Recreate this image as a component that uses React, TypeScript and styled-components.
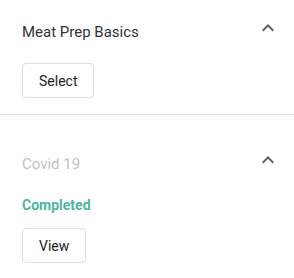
import React from "react";
import styled, { createGlobalStyle } from "styled-components";

const Global = createGlobalStyle`
  html, body { margin: 0; padding: 0; background: #fff; }
  body { font-family: Roboto, "Liberation Sans", Arial, sans-serif; }
`;

const List = styled.div`
  width: 294px;
  display: flex;
  flex-direction: column;
`;

const Section = styled.section<{ $padTop: number; $divider?: boolean }>`
  padding: ${(p) => p.$padTop}px 14px 16px 22px;
  border-bottom: ${(p) => (p.$divider ? "1px solid #e3e3e3" : "none")};
  display: flex;
  flex-direction: column;
  align-items: flex-start;
`;

const Header = styled.div`
  align-self: stretch;
  display: flex;
  justify-content: space-between;
  align-items: flex-start;
`;

const Title = styled.h3<{ $muted?: boolean }>`
  margin: 4px 0 0;
  font-size: 15px;
  line-height: 24px;
  font-weight: 400;
  color: ${(p) => (p.$muted ? "#c2c2c2" : "#333")};
`;

const Status = styled.div`
  margin-top: 19px;
  font-size: 14px;
  line-height: 20px;
  font-weight: 700;
  color: #4fb3a2;
`;

const Button = styled.button<{ $gap: number }>`
  margin-top: ${(p) => p.$gap}px;
  height: 35px;
  box-sizing: border-box;
  padding: 0 16px;
  border: 1px solid #dedede;
  border-radius: 4px;
  background: #fff;
  font-family: Roboto, "Liberation Sans", Arial, sans-serif;
  font-size: 14px;
  color: #222;
  cursor: pointer;
`;

const Chevron = () => (
  <svg width="24" height="24" viewBox="0 0 24 24" aria-hidden="true">
    <path d="M12 8l-6 6 1.41 1.41L12 10.83l4.59 4.58L18 14z" fill="#5f5f5f" />
  </svg>
);

export default function App() {
  return (
    <>
      <Global />
      <List>
        <Section $padTop={16} $divider>
          <Header>
            <Title>Meat Prep Basics</Title>
            <Chevron />
          </Header>
          <Button $gap={19}>Select</Button>
        </Section>
        <Section $padTop={33}>
          <Header>
            <Title $muted>Covid 19</Title>
            <Chevron />
          </Header>
          <Status>Completed</Status>
          <Button $gap={13}>View</Button>
        </Section>
      </List>
    </>
  );
}
